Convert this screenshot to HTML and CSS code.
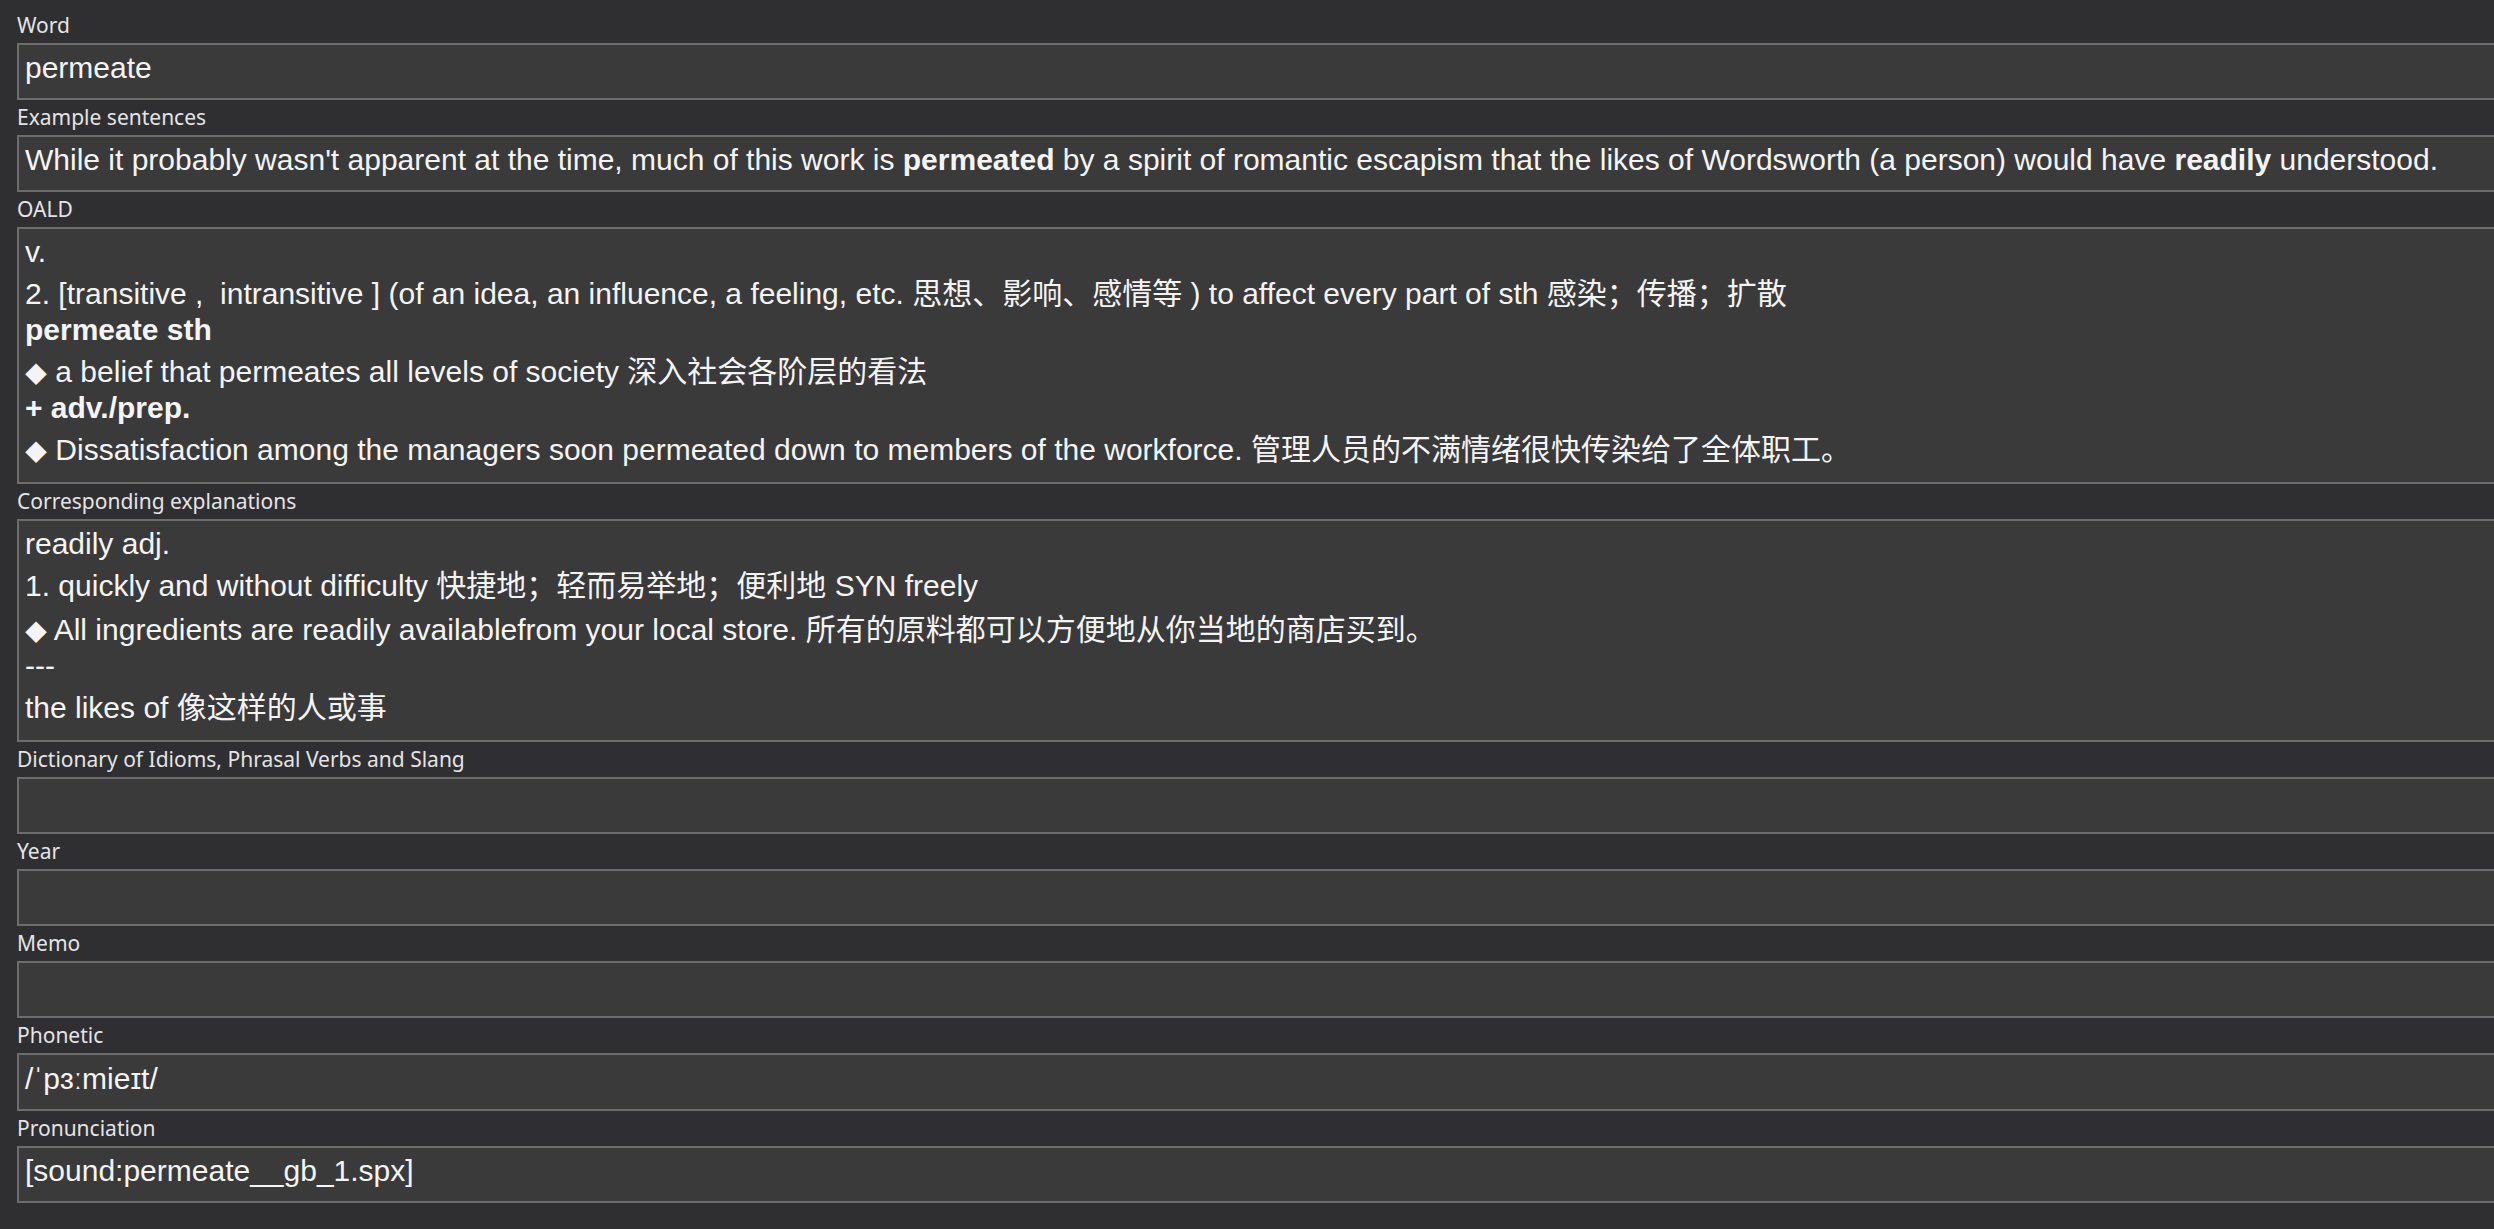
FILE: index.html
```html
<!DOCTYPE html>
<html lang="en">
<head>
<meta charset="utf-8">
<title>Editor</title>
<link rel="stylesheet" href="styles.css">
</head>
<body>
<div class="editor">
  <div class="field">
    <div class="label">Word</div>
    <div class="box">permeate</div>
  </div>
  <div class="field">
    <div class="label">Example sentences</div>
    <div class="box">While it probably wasn't apparent at the time, much of this work is <b>permeated</b> by a spirit of romantic escapism that the likes of Wordsworth (a person) would have <b>readily</b> understood.</div>
  </div>
  <div class="field">
    <div class="label">OALD</div>
    <div class="box">
      <div>v.</div>
      <div>2. [transitive ,&nbsp; intransitive ] (of an idea, an influence, a feeling, etc. 思想、影响、感情等 ) to affect every part of sth 感染；传播；扩散</div>
      <div><b>permeate sth</b></div>
      <div><span class="dia">◆</span> a belief that permeates all levels of society 深入社会各阶层的看法</div>
      <div><b>+ adv./prep.</b></div>
      <div><span class="dia">◆</span> Dissatisfaction among the managers soon permeated down to members of the workforce. 管理人员的不满情绪很快传染给了全体职工。</div>
    </div>
  </div>
  <div class="field">
    <div class="label">Corresponding explanations</div>
    <div class="box">
      <div>readily adj.</div>
      <div>1. quickly and without difficulty 快捷地；轻而易举地；便利地 SYN freely</div>
      <div><span class="dia">◆</span> All ingredients are readily availablefrom your local store. 所有的原料都可以方便地从你当地的商店买到。</div>
      <div>---</div>
      <div>the likes of 像这样的人或事</div>
    </div>
  </div>
  <div class="field">
    <div class="label">Dictionary of Idioms, Phrasal Verbs and Slang</div>
    <div class="box"><br></div>
  </div>
  <div class="field">
    <div class="label">Year</div>
    <div class="box"><br></div>
  </div>
  <div class="field">
    <div class="label">Memo</div>
    <div class="box"><br></div>
  </div>
  <div class="field">
    <div class="label">Phonetic</div>
    <div class="box box-fixed">/ˈpɜːmieɪt/</div>
  </div>
  <div class="field">
    <div class="label">Pronunciation</div>
    <div class="box">[sound:permeate__gb_1.spx]</div>
  </div>
</div>
</body>
</html>
```

FILE: styles.css
```css
html, body {
  margin: 0;
  padding: 0;
  background: #2f2f31;
  overflow: hidden;
}

body {
  padding: 8px 0 0 17px;
}

.editor {
  width: 2600px;
}

.label {
  font-family: "Noto Sans", sans-serif;
  font-size: 21px;
  color: #e4e4e4;
  padding: 3px 0 4px 0;
  line-height: normal;
}

.box {
  background: #3a3a3a;
  border: 2px solid #6c6c6c;
  padding: 6px 6px 13px 6px;
  font-family: "Liberation Sans", "Noto Sans CJK SC", sans-serif;
  font-size: 30px;
  line-height: normal;
  color: #f4f4f4;
}

.box-fixed {
  height: 35px;
  line-height: 35px;
  overflow: hidden;
}

.box b {
  font-weight: bold;
}

.dia {
  font-size: 22px;
}
```
